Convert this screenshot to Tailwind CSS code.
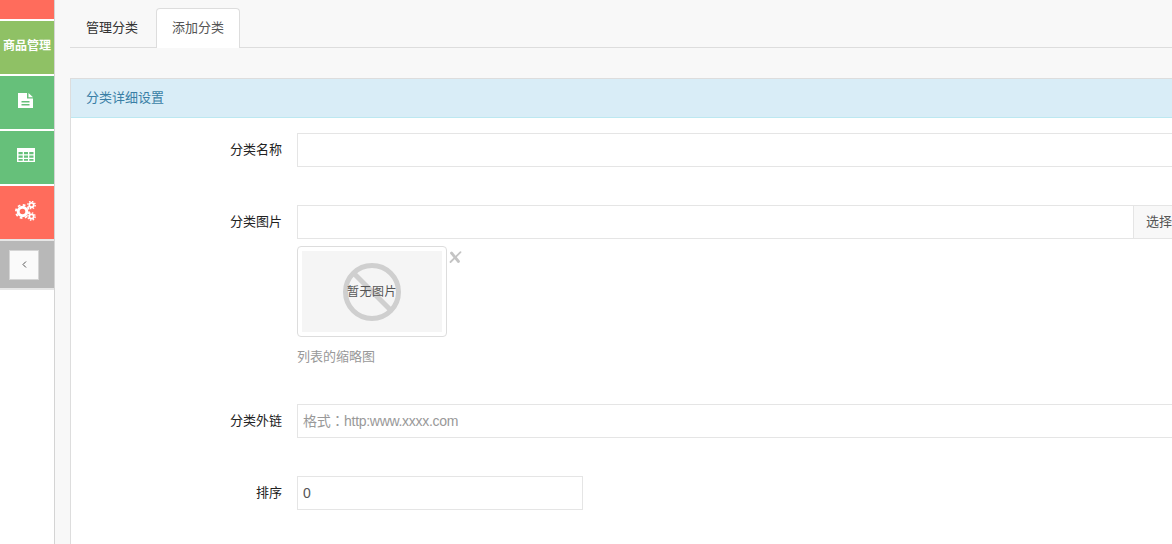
<!DOCTYPE html>
<html lang="zh-CN">
<head>
    <meta charset="UTF-8">
    <title>添加分类</title>
    <script src="https://cdn.jsdelivr.net/npm/@tailwindcss/browser@4"></script>
</head>
<body class="h-[544px] w-[1172px] overflow-hidden bg-[#f8f8f8] font-['Liberation_Sans','Noto_Sans_CJK_SC',sans-serif] text-[13px] text-[#333]">
    <div class="flex h-[544px]">
        <!-- 侧边栏 -->
        <aside class="w-[55px] shrink-0 border-r border-[#d4d4d4] bg-white">
            <div class="h-[19px] bg-[#ff6c5c]"></div>
            <div class="mt-[2px] flex h-[53px] items-center justify-center bg-[#8fc165] pb-[3px] text-[12px] font-bold text-white">商品管理</div>
            <div class="mt-[2px] flex h-[53px] items-center justify-center bg-[#66c07a] pb-[5px] pr-[3px]">
                <svg width="15" height="15" viewBox="0 0 15 15" fill="#fff"><path fill-rule="evenodd" d="M0 0h9v5.500h6V15H0z M3.500 8v1.500h8V8z M3.500 11v1.500h8V11z"/><path d="M10.500 0 15 4.200h-4.500z"/></svg>
            </div>
            <div class="mt-[2px] flex h-[53px] items-center justify-center bg-[#66c07a] pb-[5px] pr-[3px]">
                <svg width="18" height="14" viewBox="0 0 18 14" fill="#fff"><path fill-rule="evenodd" d="M0 0h18v14H0z M1.500 4v2.300h4.200V4z M7 4v2.300h4V4z M12.300 4v2.300h4.200V4z M1.500 7.500v2.300h4.200V7.500z M7 7.500v2.300h4V7.500z M12.300 7.500v2.300h4.200V7.500z M1.500 11v1.700h4.200V11z M7 11v1.700h4V11z M12.300 11v1.700h4.200V11z"/></svg>
            </div>
            <div class="mt-[2px] flex h-[53px] items-center justify-center bg-[#ff6c5c] pb-[3px] pr-[3px]">
                <svg width="21" height="20" viewBox="0 0 21 20">
                    <circle cx="7.500" cy="10.500" r="4.300" fill="none" stroke="#fff" stroke-width="3"/>
                    <circle cx="7.500" cy="10.500" r="6.600" fill="none" stroke="#fff" stroke-width="1.800" stroke-dasharray="2.700 2.500"/>
                    <circle cx="16.500" cy="4" r="2.200" fill="none" stroke="#fff" stroke-width="1.800"/>
                    <circle cx="16.500" cy="4" r="3.700" fill="none" stroke="#fff" stroke-width="1.300" stroke-dasharray="1.500 1.400"/>
                    <circle cx="16.500" cy="15.500" r="2.200" fill="none" stroke="#fff" stroke-width="1.800"/>
                    <circle cx="16.500" cy="15.500" r="3.700" fill="none" stroke="#fff" stroke-width="1.300" stroke-dasharray="1.500 1.400"/>
                </svg>
            </div>
            <div class="flex h-[51px] items-center border-y-2 border-[#e6e6e6] bg-[#b8b8b8] pl-[9px]">
                <div class="flex h-[30px] w-[30px] items-center justify-center border border-[#d5d5d5] bg-[#fafafa]">
                    <svg width="5" height="7" viewBox="0 0 5 7" fill="none" stroke="#555" stroke-width="1"><path d="M4 .5 1 3.500 4 6.500"/></svg>
                </div>
            </div>
        </aside>

        <!-- 主内容 -->
        <main class="w-[1300px] shrink-0 pl-[15px]">
            <div class="flex h-[48px] items-end border-b border-[#ddd]">
                <a class="flex h-[39px] w-[86px] items-center justify-center pr-[2px] text-[#333]">管理分类</a>
                <a class="-mb-px flex h-[40px] w-[84px] items-center justify-center rounded-t-[4px] border border-b-0 border-[#ddd] bg-white pb-[1px] text-[#555]">添加分类</a>
            </div>

            <section class="mt-[30px] h-[480px] border border-[#ddd] bg-white">
                <div class="flex h-[39px] items-center border-b border-[#bce8f1] bg-[#d9edf7] px-[15px] text-[#3a7fa6]">分类详细设置</div>

                <div class="pt-[15px]">
                    <div class="flex">
                        <label class="w-[226px] pr-[15px] pt-[8px] text-right leading-[18px] text-[#222]">分类名称</label>
                        <div class="h-[34px] w-[1000px] border border-[#e5e5e5] bg-white"></div>
                    </div>

                    <div class="mt-[38px] flex">
                        <label class="w-[226px] pr-[15px] pt-[8px] text-right leading-[18px] text-[#222]">分类图片</label>
                        <div>
                            <div class="flex">
                                <div class="h-[34px] w-[837px] border border-[#e5e5e5] bg-white"></div>
                                <button class="-ml-px h-[34px] w-[80px] border border-[#e5e5e5] bg-[#f8f8f8] pl-[12px] text-left text-[#555]">选择</button>
                            </div>
                            <div class="relative mt-[7px] h-[91px] w-[150px] rounded-[4px] border border-[#ddd] bg-white p-[4px]">
                                <div class="relative flex h-[81px] w-[140px] items-center justify-center bg-[#f5f5f5]">
                                    <div class="absolute h-[58px] w-[58px] rounded-full border-[5px] border-[#cfcfcf]"></div>
                                    <div class="absolute h-[5px] w-[56px] rotate-45 bg-[#cfcfcf]"></div>
                                    <span class="relative text-[12px] tracking-[0.5px] text-[#555]">暂无图片</span>
                                </div>
                                <svg class="absolute left-[151px] top-[4px]" width="13" height="12" viewBox="0 0 13 12" fill="none" stroke="#c4c4c4" stroke-linecap="round"><path d="M1.500 11 11.500 1.200" stroke-width="1.800"/><path d="M2.500 2 9.500 10.500" stroke-width="2.800"/></svg>
                            </div>
                            <p class="mt-[11px] leading-[18px] text-[#999]">列表的缩略图</p>
                        </div>
                    </div>

                    <div class="mt-[38px] flex">
                        <label class="w-[226px] pr-[15px] pt-[8px] text-right leading-[18px] text-[#222]">分类外链</label>
                        <input lang="zh-TW" class="h-[34px] w-[1000px] border border-[#e5e5e5] bg-white px-[5px] font-['Liberation_Sans','Noto_Sans_CJK_TC',sans-serif] text-[14px] tracking-[-0.3px] text-[#333] outline-none placeholder:text-[#999]" placeholder="格式：http:www.xxxx.com">
                    </div>

                    <div class="mt-[38px] flex">
                        <label class="w-[226px] pr-[15px] pt-[8px] text-right leading-[18px] text-[#222]">排序</label>
                        <input class="h-[34px] w-[286px] border border-[#e5e5e5] bg-white px-[5px] text-[14px] text-[#555] outline-none" value="0">
                    </div>
                </div>
            </section>
        </main>
    </div>
</body>
</html>
